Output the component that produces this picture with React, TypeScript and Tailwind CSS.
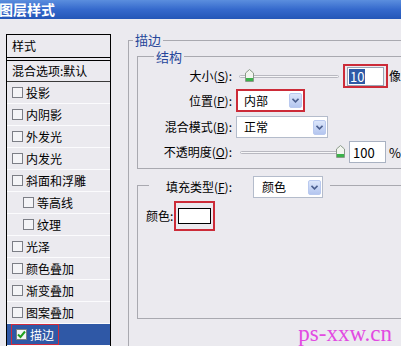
import React from "react";

const FONT = "font-['Noto_Sans_CJK_SC','Noto_Sans',sans-serif]";

function Check({ checked = false }: { checked?: boolean }) {
  return (
    <span className="flex w-[11px] h-[11px] shrink-0 items-center justify-center border border-[#7c7e86] bg-[#f4f4f7]">
      {checked && (
        <svg width="9" height="9" viewBox="0 0 9 9">
          <path d="M1 4.5 L3.5 7 L8 1.5" stroke="#21a121" strokeWidth="2" fill="none" />
        </svg>
      )}
    </span>
  );
}

function Arrow() {
  return (
    <span className="flex w-[13px] h-[15px] items-center justify-center rounded-[2px] border border-[#b9c9ef] bg-gradient-to-b from-[#dce6fb] to-[#b4c6ef]">
      <svg width="7" height="5" viewBox="0 0 7 5">
        <path d="M0.5 0.8 L3.5 3.8 L6.5 0.8" stroke="#4b5f8f" strokeWidth="1.6" fill="none" />
      </svg>
    </span>
  );
}

function Slider({ pos }: { pos: number }) {
  return (
    <div className="relative h-[14px] w-full">
      <div className="absolute left-0 right-0 top-[6px] h-[3px] rounded-full border border-[#b8b8c0] bg-[#f6f6f8]" />
      <svg
        className="absolute top-0"
        style={{ left: pos }}
        width="9"
        height="13"
        viewBox="0 0 9 13"
      >
        <path d="M0.5 4 L4.5 0.5 L8.5 4 L8.5 12.5 L0.5 12.5 Z" fill="#f2f5ef" stroke="#8b9a8a" />
        <rect x="1" y="9" width="7" height="3" fill="#3bb24a" />
      </svg>
    </div>
  );
}

function U({ c }: { c: string }) {
  return <span className="underline underline-offset-[1px] decoration-1">{c}</span>;
}

const rows: { t: string; sub?: boolean; sel?: boolean }[] = [
  { t: "投影" },
  { t: "内阴影" },
  { t: "外发光" },
  { t: "内发光" },
  { t: "斜面和浮雕" },
  { t: "等高线", sub: true },
  { t: "纹理", sub: true },
  { t: "光泽" },
  { t: "颜色叠加" },
  { t: "渐变叠加" },
  { t: "图案叠加" },
  { t: "描边", sel: true },
];

export default function App() {
  return (
    <div className={`relative w-[401px] h-[346px] overflow-hidden bg-[#ebeaef] text-[12px] leading-none text-black ${FONT}`}>
      <div className="h-[19px] bg-gradient-to-b from-[#5b8ede] via-[#3569cc] to-[#2456b7] text-white font-bold text-[14px] leading-[19px] ml-[-1px]">
        图层样式
      </div>
      <div className="flex">
        {/* left panel */}
        <div className="ml-[6px] mt-[15px] w-[105px] h-[400px] shrink-0 border border-black">
          <div className="h-[23px] border-b border-black pl-[5px] flex items-center">样式</div>
          <div className="mt-[2px] border-t border-black h-[22px] border-b border-b-[#3a3a3a] pl-[5px] flex items-center">
            混合选项:默认
          </div>
          {rows.map((r) => (
            <div
              key={r.t}
              className={`h-[22px] flex items-center border-b border-[#fbfbfd] ${r.sub ? "pl-[16px]" : "pl-[5px]"} ${r.sel ? "bg-[#2f58a6] text-white" : ""}`}
            >
              {r.sel ? (
                <span className="flex items-center gap-[3px] border-[1.5px] border-[#d02a3c] h-[21px] pl-[4px] pr-[4px] ml-[-1px]">
                  <Check checked />
                  <span>{r.t}</span>
                </span>
              ) : (
                <>
                  <Check />
                  <span className="ml-[3px]">{r.t}</span>
                </>
              )}
            </div>
          ))}
        </div>

        {/* right */}
        <div className="relative ml-[17px] mt-[21px] w-[320px] h-[400px] border-l border-t border-[#a9a9b0]">
          <span className="absolute left-[4px] top-[-8px] px-[2px] bg-[#ebeaef] text-[#27479a] text-[13px]">描边</span>

          {/* structure group */}
          <div className="relative ml-[8px] mt-[15px] h-[113px] border-l border-t border-b border-[#a9a9b0]">
            <span className="absolute left-[16px] top-[-7px] px-[2px] bg-[#ebeaef] text-[#27479a] text-[13px]">结构</span>
            <div className="pt-[7px] flex flex-col">
              {/* size */}
              <div className="flex items-center h-[24px]">
                <span className="w-[94px] text-right">
                  大小(<U c="S" />):
                </span>
                <div className="ml-[7px] w-[100px]">
                  <Slider pos={6} />
                </div>
                <div className="ml-[4px] w-[45px] h-[24px] border-2 border-[#cc2b38] flex items-center justify-center">
                  <div className="w-[37px] h-[19px] bg-white border border-[#9aa5b5] flex items-center pl-[1px]">
                    <span className="bg-[#2e5aa6] text-white px-[1px] leading-[15px] text-[13px]">10</span>
                  </div>
                </div>
                <span className="ml-[1px] whitespace-nowrap">像素</span>
              </div>
              {/* position */}
              <div className="flex items-center h-[23px] mt-[1px]">
                <span className="w-[94px] text-right">
                  位置(<U c="P" />):
                </span>
                <div className="ml-[4px] w-[69px] h-[23px] border-2 border-[#cc2b38] bg-white flex items-center justify-between pl-[6px] pr-[1px]">
                  <span>内部</span>
                  <Arrow />
                </div>
              </div>
              {/* blend */}
              <div className="flex items-center h-[22px] mt-[4px]">
                <span className="w-[94px] text-right">
                  混合模式(<U c="B" />):
                </span>
                <div className="ml-[4px] w-[92px] h-[22px] border border-[#b4bccb] bg-white flex items-center justify-between pl-[7px] pr-[1px]">
                  <span>正常</span>
                  <Arrow />
                </div>
              </div>
              {/* opacity */}
              <div className="flex items-center h-[22px] mt-[3px]">
                <span className="w-[94px] text-right">
                  不透明度(<U c="O" />):
                </span>
                <div className="ml-[8px] w-[104px]">
                  <Slider pos={96} />
                </div>
                <div className="ml-[5px] w-[37px] h-[22px] border border-[#a9b2c2] bg-white flex items-center pl-[3px] text-[13px]">
                  100
                </div>
                <span className="ml-[3px] text-[13px]">%</span>
              </div>
            </div>
          </div>

          {/* fill group */}
          <div className="relative ml-[8px] mt-[16px] h-[134px] border-l border-t border-b border-[#a9a9b0]">
            <div className="absolute left-[11px] top-[-10px] flex items-center bg-[#ebeaef] pr-[7px]">
              <span className="w-[83px] text-right">
                填充类型(<U c="F" />):
              </span>
              <div className="ml-[21px] w-[70px] h-[22px] border border-[#b4bccb] bg-white flex items-center justify-between pl-[8px] pr-[1px]">
                <span>颜色</span>
                <Arrow />
              </div>
            </div>
            <div className="mt-[15px] pl-[8px] flex items-center">
              <span className="w-[31px]">颜色:</span>
              <div className="ml-[-3px] w-[41px] h-[30px] border-2 border-[#cc2b38] flex items-center justify-center">
                <div className="w-[33px] h-[16px] border border-black bg-white" />
              </div>
            </div>
          </div>
        </div>
      </div>

      <span className="absolute right-[9px] bottom-[1px] text-[23px] leading-none text-[#e24ae2] font-['Liberation_Serif',serif]">
        ps-xxw.cn
      </span>
    </div>
  );
}
